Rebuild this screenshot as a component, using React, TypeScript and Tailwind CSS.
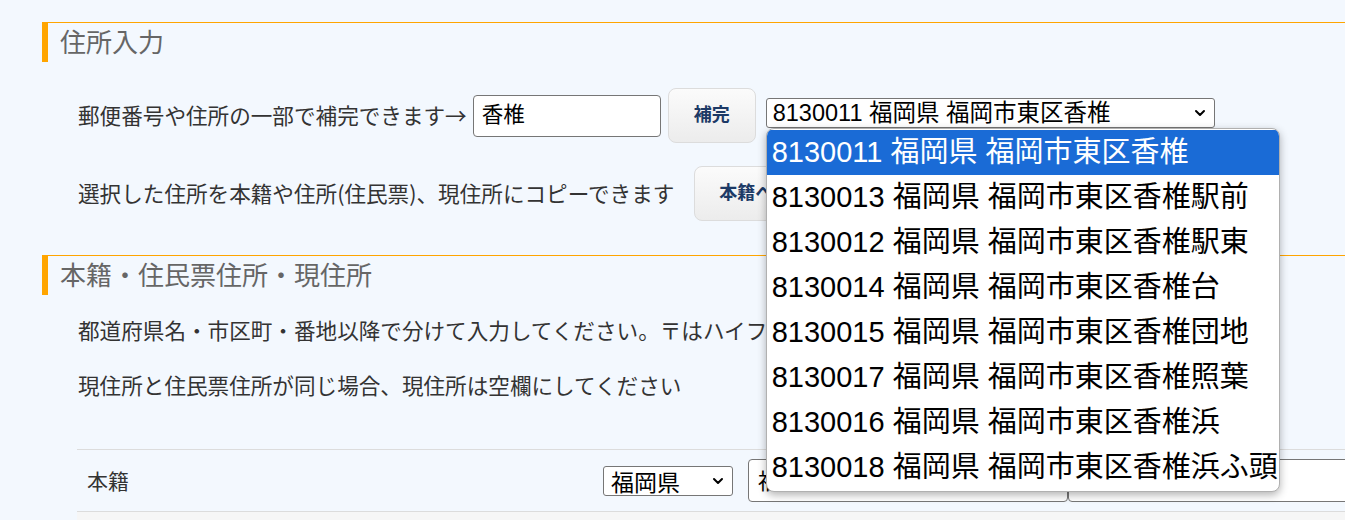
import React from 'react';
import { ChevronDown } from 'lucide-react';

const candidates = [
  '8130011 福岡県 福岡市東区香椎',
  '8130013 福岡県 福岡市東区香椎駅前',
  '8130012 福岡県 福岡市東区香椎駅東',
  '8130014 福岡県 福岡市東区香椎台',
  '8130015 福岡県 福岡市東区香椎団地',
  '8130017 福岡県 福岡市東区香椎照葉',
  '8130016 福岡県 福岡市東区香椎浜',
  '8130018 福岡県 福岡市東区香椎浜ふ頭',
];

const SectionHeader: React.FC<{ title: string }> = ({ title }) => (
  <div className="flex h-[40px] items-center border-t border-l-[6px] border-t-[#ffa500] border-l-[#ffa500] pl-[12px]">
    <h2 className="text-[26px] leading-[40px] font-normal text-[#666]">{title}</h2>
  </div>
);

const GrayButton: React.FC<{ label: string; className?: string }> = ({ label, className = '' }) => (
  <button
    type="button"
    className={`h-[55px] shrink-0 rounded-[8px] border border-[#dcdcdc] bg-gradient-to-b from-[#fbfbfb] to-[#ececec] text-[18px] font-bold text-[#1d3a66] ${className}`}
  >
    {label}
  </button>
);

const App: React.FC = () => {
  return (
    <div className="h-[520px] w-full overflow-hidden bg-[#f3f8fe] pt-[22px] pl-[42px] font-['Liberation_Sans','Noto_Sans_CJK_JP',sans-serif] text-[#333]">
      <SectionHeader title="住所入力" />

      <div className="mt-[26px] flex h-[55px] items-center pl-[36px]">
        <span className="whitespace-nowrap font-['Noto_Sans_CJK_JP',sans-serif] text-[21.6px]">
          郵便番号や住所の一部で補完できます→
        </span>
        <div className="ml-[6px] flex h-[42px] w-[188px] items-center rounded-[4px] border border-[#767676] bg-white pl-[8px] text-[21.5px] text-black">
          香椎
        </div>
        <GrayButton label="補完" className="ml-[7px] w-[88px]" />
        <div className="relative ml-[10px] mb-[5px]">
          <div className="flex h-[30px] w-[449px] items-center justify-between rounded-[3px] border border-[#767676] bg-white pr-[6px] pl-[6px] text-[23.5px] leading-[28px] text-black">
            <span className="whitespace-nowrap">8130011 福岡県 福岡市東区香椎</span>
            <ChevronDown size={16} strokeWidth={3} />
          </div>
          <div className="absolute top-[30px] left-0 z-10 w-[514px] overflow-hidden rounded-[8px] border border-[#b0b0b0] bg-white py-[1px] shadow-[0_3px_8px_rgba(0,0,0,0.3)]">
            {candidates.map((c, i) => (
              <div
                key={c}
                className={`h-[45px] px-[5px] text-[29px] leading-[44px] whitespace-nowrap ${
                  i === 0 ? 'bg-[#1a6bd6] text-white' : 'text-black'
                }`}
              >
                {c}
              </div>
            ))}
          </div>
        </div>
      </div>

      <div className="mt-[23px] flex h-[55px] items-center pl-[36px]">
        <span className="whitespace-nowrap font-['Noto_Sans_CJK_JP',sans-serif] text-[21.6px]">
          選択した住所を本籍や住所(住民票)、現住所にコピーできます
        </span>
        <GrayButton label="本籍へコピー" className="ml-[20px] px-[24px]" />
      </div>

      <div className="mt-[34px]">
        <SectionHeader title="本籍・住民票住所・現住所" />
      </div>

      <p className="mt-[17px] h-[35px] pl-[36px] font-['Noto_Sans_CJK_JP',sans-serif] text-[21.6px] leading-[35px] whitespace-nowrap">
        都道府県名・市区町・番地以降で分けて入力してください。〒はハイフンなしで入力
      </p>
      <p className="mt-[20px] h-[35px] pl-[36px] font-['Noto_Sans_CJK_JP',sans-serif] text-[21.6px] leading-[35px] whitespace-nowrap">
        現住所と住民票住所が同じ場合、現住所は空欄にしてください
      </p>

      <div className="mt-[47px] ml-[35px] border-t border-[#dcdcdc]">
        <div className="flex h-[62px] items-center border-b border-[#dcdcdc]">
          <div className="w-[526px] shrink-0 pl-[10px] font-['Noto_Sans_CJK_JP',sans-serif] text-[21px] leading-[30px] mb-[2px]">本籍</div>
          <div className="flex h-[30px] w-[130px] shrink-0 items-center justify-between rounded-[3px] border border-[#767676] bg-white pr-[6px] pl-[7px] text-[23px] leading-[28px] text-black">
            <span className="font-['Noto_Sans_CJK_JP',sans-serif]">福岡県</span>
            <ChevronDown size={16} strokeWidth={3} />
          </div>
          <div className="ml-[15px] flex h-[43px] w-[320px] shrink-0 items-center rounded-[4px] border border-[#767676] bg-white pl-[9px] text-[21.5px] text-black">
            <span className="font-['Noto_Sans_CJK_JP',sans-serif]">福岡市東区香椎</span>
          </div>
          <div className="flex h-[43px] w-[400px] shrink-0 items-center rounded-[4px] border border-[#767676] bg-white" />
        </div>
        <div className="h-[40px] bg-[#f6f6f6]" />
      </div>
    </div>
  );
};

export default App;
